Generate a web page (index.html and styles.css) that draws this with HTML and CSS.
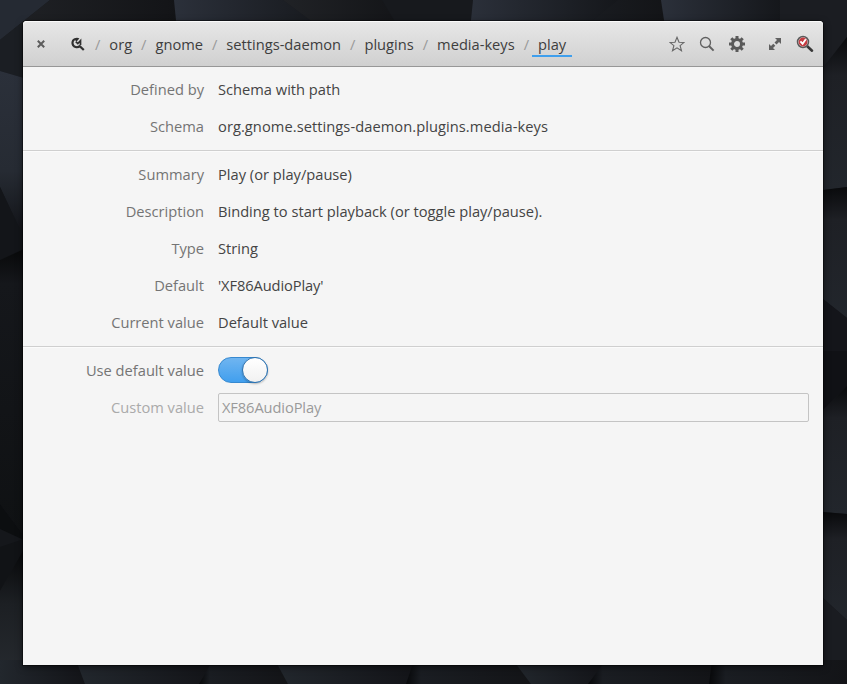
FILE: index.html
```
<!DOCTYPE html>
<html lang="en">
<head>
<meta charset="utf-8">
<title>dconf Editor</title>
<link rel="stylesheet" href="styles.css">
</head>
<body>
<svg class="wallpaper" viewBox="0 0 847 684" aria-hidden="true">
  <defs>
    <linearGradient id="a"><stop offset="0" stop-color="#2b303a"/><stop offset="1" stop-color="#15171b"/></linearGradient>
    <linearGradient id="b"><stop offset="0" stop-color="#202226"/><stop offset="1" stop-color="#131417"/></linearGradient>
    <linearGradient id="c"><stop offset="0" stop-color="#07080a"/><stop offset=".12" stop-color="#1a1d22"/><stop offset="1" stop-color="#131417"/></linearGradient>
    <linearGradient id="d"><stop offset="0" stop-color="#22272d"/><stop offset="1" stop-color="#131418"/></linearGradient>
    <linearGradient id="e" x2="0" y2="1"><stop offset="0" stop-color="#090a0c"/><stop offset=".25" stop-color="#1e2025"/><stop offset="1" stop-color="#22262c"/></linearGradient>
    <linearGradient id="f" x2="0" y2="1"><stop offset="0" stop-color="#2b303a"/><stop offset=".6" stop-color="#262b33"/><stop offset="1" stop-color="#111216"/></linearGradient>
    <linearGradient id="g" x2="0" y2="1"><stop offset="0" stop-color="#08090a"/><stop offset=".4" stop-color="#1c1f23"/><stop offset="1" stop-color="#272b30"/></linearGradient>
    <linearGradient id="h" x2="0" y2="1"><stop offset="0" stop-color="#08090a"/><stop offset=".12" stop-color="#15171b"/><stop offset="1" stop-color="#0f1113"/></linearGradient>
  </defs>
  <path fill="#15171b" d="M0 0h847v684H0z"/>
  <path fill="#252a33" d="M0 0h50L0 40z"/>
  <path fill="url(#b)" d="M50 0h124l4 40H0z"/>
  <path fill="url(#a)" d="M174 0h109l54 40H178z"/>
  <path fill="url(#b)" d="M283 0h99l24 40h-69z"/>
  <path fill="#17191d" d="M382 0h91l-4 40h-63z"/>
  <path fill="url(#a)" d="M473 0h145l-50 40h-99z"/>
  <path fill="url(#c)" d="M618 0h43l6 40h-99z"/>
  <path fill="url(#a)" d="M661 0h120v40H667z"/>
  <path fill="#1b1d22" d="M780 0h67v37l-24 31h-43z"/>
  <path fill="#1b1e23" d="M0 40l24-19v57L0 71z"/>
  <path fill="url(#f)" d="M0 71l24 7v160L0 187z"/>
  <path fill="#131519" d="M0 187l24 51v11L0 260z"/>
  <path fill="url(#h)" d="M0 260l24-11v287L0 504z"/>
  <path fill="#0c0e10" d="M0 504l24 32v4L0 529z"/>
  <path fill="#111316" d="M0 547l24-8v14L0 591z"/>
  <path fill="url(#g)" d="M0 591l24-42v135H0z"/>
  <path fill="url(#e)" d="M823 68l24-31v150l-24 3z"/>
  <path fill="url(#e)" d="M823 190l24-3v131l-24-19z"/>
  <path fill="#14151a" d="M823 299l24 19v33h-24z"/>
  <path fill="#101115" d="M823 351h24v35l-24 24z"/>
  <path fill="url(#e)" d="M823 410l24-24v128l-24-2z"/>
  <path fill="url(#e)" d="M823 512l24 2v106l-24-22z"/>
  <path fill="#1a1c21" d="M823 598l24 22v64h-24z"/>
  <path fill="url(#d)" d="M0 660h76l9 24H0z"/>
  <path fill="url(#d)" d="M76 660h137l-14 24H85z"/>
  <path fill="url(#c)" d="M213 660h62l13 24h-89z"/>
  <path fill="url(#d)" d="M275 660h139l-8 24H288z"/>
  <path fill="url(#c)" d="M414 660h99l18 24H406z"/>
  <path fill="url(#d)" d="M513 660h93l-18 24h-57z"/>
  <path fill="url(#c)" d="M606 660h106l-3 24H588z"/>
  <path fill="url(#c)" d="M712 660h135v24H709z"/>
</svg>

<main class="window">
  <header class="headerbar">
    <svg class="close" viewBox="0 0 8 8"><path d="M.8.8l6.400 6.400M7.200.8L.8 7.200" fill="none" stroke="#5c5c5c" stroke-width="2"/></svg>
    <nav class="path">
      <svg class="root" viewBox="0 0 14 14"><path d="M3.200 2.600C1.300 3.600 1 6.600 2.200 8.400c1.300 2 4.600 2.500 6.600.8l4 3.800" fill="none" stroke="#303030" stroke-width="2.200"/><path d="M1.400 3.200C3 .6 6.500.2 8.400 1.400L7 3 5.600 4.600 4.200 3.300z" fill="#303030"/><path d="M4.800 4.600l2 2 2.700-2.900v4.200" fill="none" stroke="#303030" stroke-width="1.700"/></svg>
      <i>/</i><span>org</span><i>/</i><span>gnome</span><i>/</i><span>settings-daemon</span><i>/</i><span>plugins</span><i>/</i><span>media-keys</span><i>/</i><span class="current">play</span>
    </nav>
    <div class="tools">
      <svg width="16" height="16" viewBox="0 0 16 16"><path d="M8 1.300l2 4.900 5.100.2-4 3.300 1.400 5L8 11.900l-4.500 2.800 1.400-5-4-3.300 5.100-.2z" fill="none" stroke="#666" stroke-width="1.100"/></svg>
      <svg width="16" height="16" viewBox="0 0 16 16"><circle cx="6.500" cy="6.500" r="5" fill="none" stroke="#606060" stroke-width="1.300"/><path d="M10 10l4.600 4.600" stroke="#606060" stroke-width="2"/></svg>
      <svg width="16" height="16" viewBox="0 0 16 16"><circle cx="8" cy="8" r="4.500" fill="none" stroke="#5a5a5a" stroke-width="3"/><path d="M8 0v3M8 13v3M0 8h3M13 8h3M2.300 2.300l2.200 2.200M11.500 11.500l2.200 2.200M13.700 2.300l-2.200 2.200M4.500 11.500l-2.200 2.200" stroke="#5a5a5a" stroke-width="3"/></svg>
      <svg class="expand" width="14" height="14" viewBox="0 0 14 14"><path d="M7 1h6v6l-2-2-2.500 2.500-2-2L9 3zM7 13H1V7l2 2 2.300-2.300 2 2L5 11z" fill="#606060"/></svg>
      <svg class="app" width="18" height="18" viewBox="0 0 18 18"><path d="M11 11l5 4.700" stroke="#383838" stroke-width="2.600" stroke-linecap="round"/><circle cx="7" cy="7" r="5.500" fill="#ddd" stroke="#5a5a5a" stroke-width="1.500"/><circle cx="7" cy="7" r="4.400" fill="#c43b40"/><path d="M4.400 6.400l2.200 2.300 3.200-4.400" fill="none" stroke="#fff" stroke-width="1.900"/></svg>
    </div>
  </header>

  <dl class="group">
    <dt>Defined by</dt><dd>Schema with path</dd>
    <dt>Schema</dt><dd class="schema">org.gnome.settings-daemon.plugins.media-keys</dd>
  </dl>
  <dl class="group">
    <dt>Summary</dt><dd>Play (or play/pause)</dd>
    <dt>Description</dt><dd>Binding to start playback (or toggle play/pause).</dd>
    <dt>Type</dt><dd>String</dd>
    <dt>Default</dt><dd class="literal">'XF86AudioPlay'</dd>
    <dt>Current value</dt><dd>Default value</dd>
  </dl>
  <dl class="group">
    <dt>Use default value</dt><dd><span class="switch"><span class="knob"></span></span></dd>
    <dt class="disabled">Custom value</dt><dd><span class="entry literal">XF86AudioPlay</span></dd>
  </dl>
</main>
</body>
</html>
```

FILE: styles.css
```
* { box-sizing: border-box; }
body {
  margin: 0;
  height: 684px;
  padding: 21px 24px 19px 23px;
  overflow: hidden;
  background: #15171b;
  font: 14.667px/20px "Open Sans", sans-serif;
  color: #444;
}
.wallpaper { position: absolute; inset: 0; width: 847px; height: 684px; }
.window {
  position: relative;
  height: 644px;
  background: #f5f5f5;
  border-radius: 4px 4px 0 0;
  box-shadow: 0 0 0 1px rgba(0,0,0,.4), 0 2px 7px rgba(0,0,0,.55);
}
.headerbar {
  display: flex;
  align-items: center;
  height: 46px;
  padding: 0 9px 0 14px;
  border-bottom: 1px solid #979797;
  border-radius: 4px 4px 0 0;
  background: linear-gradient(#e7e7e7, #d0d0d0);
  box-shadow: inset 0 1px #fafafa;
}
.close { width: 8px; height: 8px; }
.path { display: flex; align-items: center; margin-left: 26px; color: #3e3e3e; }
.path span { height: 26px; padding: 3px 6px 0; }
.path i { width: 11.350px; text-align: center; font-style: normal; color: #999; padding-top: 1px; }
.path .root { width: 14px; height: 14px; margin-right: 7px; }
.path .current { width: 40px; border-bottom: 2px solid #3f9fed; }
.tools { display: flex; align-items: center; gap: 14px; margin-left: auto; }
.expand { margin-left: 9px; }
svg { display: block; }
.group {
  display: grid;
  grid-template-columns: 181px 591px;
  grid-auto-rows: 37px;
  column-gap: 14px;
  align-items: center;
  margin: 0;
  padding: 3px 0 6px;
}
.group + .group { border-top: 1px solid #cfcfcf; padding-top: 4px; box-shadow: inset 0 1px #fbfbfb; }
dt { text-align: right; color: #747474; }
dd { margin: 0; }
.schema { letter-spacing: .06px; }
.literal { letter-spacing: -.1px; }
.disabled { color: #aaa; }
.switch {
  display: flex;
  justify-content: flex-end;
  width: 50px;
  height: 26px;
  border: 1px solid #3689d0;
  border-radius: 13px;
  background: linear-gradient(#70b5f0, #419fee);
}
.knob {
  width: 26px;
  height: 26px;
  margin: -1px;
  border: 1px solid #2f72ae;
  border-radius: 50%;
  background: linear-gradient(#fff, #f1f1f1);
  box-shadow: 0 1px 2px rgba(0,0,0,.25);
}
.entry {
  display: block;
  height: 29px;
  margin-top: 1px;
  padding: 3px;
  border: 1px solid #c4c4c4;
  border-radius: 2px;
  color: #9a9a9a;
}
```
